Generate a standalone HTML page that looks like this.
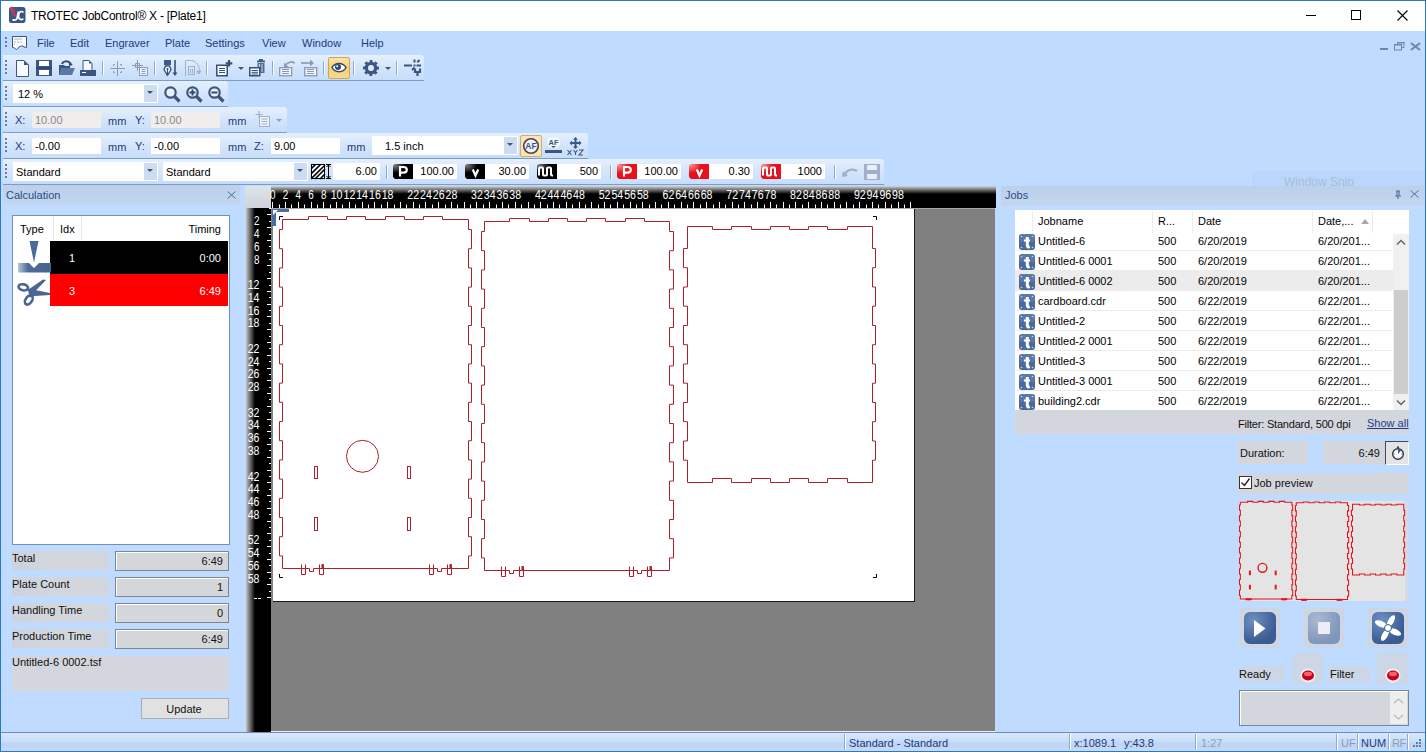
<!DOCTYPE html>
<html><head><meta charset="utf-8">
<style>
*{box-sizing:border-box;margin:0;padding:0}
html,body{width:1426px;height:752px;overflow:hidden}
body{position:relative;background:#bfdbff;font-family:"Liberation Sans",sans-serif;font-size:12px;color:#000}
.a{position:absolute}
.t{position:absolute;white-space:nowrap;line-height:14px}
.tb{position:absolute;background:linear-gradient(#e6f0fd,#d6e6fb 45%,#c6ddfa);border-bottom:1px solid #7b9cc9;border-radius:0 3px 0 0}
.grip{position:absolute;left:5px;width:2px;background:repeating-linear-gradient(#5d7fb0 0 2px,transparent 2px 4px)}
.inp{position:absolute;background:#fff}
.lbl{color:#1d3a7a}
.sep{position:absolute;width:1px;background:#8ea9cf;box-shadow:1px 0 0 #fff}
.combo-btn{position:absolute;background:#cddcf3}
.arrow{position:absolute;width:0;height:0;border-left:3.5px solid transparent;border-right:3.5px solid transparent;border-top:3.5px solid #44536e}
</style></head>
<body>
<!-- window border -->
<div class="a" style="left:0;top:0;width:1426px;height:1px;background:#2b79c2"></div>
<div class="a" style="left:0;top:0;width:1px;height:752px;background:#2b79c2"></div>
<div class="a" style="left:1425px;top:0;width:1px;height:752px;background:#2b79c2"></div>
<!-- title bar -->
<div class="a" style="left:1px;top:1px;width:1424px;height:30px;background:#fff"></div>
<svg class="a" style="left:9px;top:7px" width="17" height="16"><rect x="0" y="0" width="16.5" height="16" rx="2.8" fill="#3b5585"/><path d="M0.5 1.5Q1 0 2.5 0H4.5L7 9 5.5 10.5z" fill="#c8324a"/><path d="M2 1l3 8.5" stroke="#4c8a8a" stroke-width=".8" opacity=".6"/><path d="M9.5 4.5L8 11.5Q7.3 13.3 5 13H3.5" fill="none" stroke="#fff" stroke-width="1.8"/><path d="M14.5 5.5Q13.5 4.3 12 4.5 9.8 5 9.6 8.5 9.5 12.5 12.5 12.6 13.8 12.6 14.2 11.5" fill="none" stroke="#fff" stroke-width="1.6"/></svg>
<div class="t" style="left:31px;top:9px;font-size:12px;letter-spacing:-0.25px;color:#000">TROTEC JobControl® X - [Plate1]</div>
<div class="a" style="left:1306px;top:15px;width:10px;height:1px;background:#000"></div>
<div class="a" style="left:1351px;top:10px;width:10px;height:10px;border:1px solid #000"></div>
<svg class="a" style="left:1397px;top:10px" width="11" height="11"><path d="M.5 .5L10.5 10.5M10.5 .5L.5 10.5" stroke="#000" stroke-width="1.1"/></svg>

<!-- menu bar -->
<div class="a" style="left:1px;top:31px;width:1424px;height:24px;background:#bfdbff"></div>
<div class="grip" style="top:37px;height:12px"></div>
<svg class="a" style="left:11px;top:35px" width="17" height="17"><path d="M1.5 1.5h14v11c-2 0-3-1.5-5-1.5s-3 2-5 3.5c-1.5-1-2-2-4-2z" fill="#fafcff" stroke="#44536a"/><path d="M3 4h8M3 7h2M6 7h2M9 7h2M3 9.5h1" stroke="#a9b2bf"/></svg>
<div class="t lbl" style="left:37px;top:36px;font-size:11px">File</div>
<div class="t lbl" style="left:70px;top:36px;font-size:11px">Edit</div>
<div class="t lbl" style="left:105px;top:36px;font-size:11px">Engraver</div>
<div class="t lbl" style="left:165px;top:36px;font-size:11px">Plate</div>
<div class="t lbl" style="left:205px;top:36px;font-size:11px">Settings</div>
<div class="t lbl" style="left:262px;top:36px;font-size:11px">View</div>
<div class="t lbl" style="left:302px;top:36px;font-size:11px">Window</div>
<div class="t lbl" style="left:361px;top:36px;font-size:11px">Help</div>
<div class="a" style="left:1380px;top:48px;width:8px;height:2px;background:#7388a6"></div>
<svg class="a" style="left:1394px;top:41px" width="11" height="10"><path d="M3.5 3V1.5h6.5v5H8" fill="none" stroke="#7388a6"/><path d="M3 1h7.5v1.5H3z" fill="#7388a6"/><rect x="0.5" y="3.5" width="7" height="5.5" fill="none" stroke="#7388a6"/><path d="M0 3h8v1.5H0z" fill="#7388a6"/></svg>
<svg class="a" style="left:1410px;top:42px" width="11" height="9"><path d="M1 1L10 8M10 1L1 8" stroke="#7388a6" stroke-width="2.2"/></svg>

<!-- toolbars -->
<div class="tb" style="left:3px;top:55px;width:421px;height:26px"></div>
<div class="tb" style="left:3px;top:81px;width:225px;height:26px"></div>
<div class="tb" style="left:3px;top:107px;width:284px;height:26px"></div>
<div class="tb" style="left:3px;top:133px;width:585px;height:26px"></div>
<div class="tb" style="left:3px;top:159px;width:881px;height:26px"></div>
<div id="toolbars"></div>
<div class="grip" style="top:86px;height:16px"></div>
<div class="inp" style="left:13px;top:84px;width:145px;height:19px"></div><div class="combo-btn" style="left:144px;top:85px;width:13px;height:17px"></div><div class="arrow" style="left:147px;top:91px;border-top-color:#44536e"></div><div class="t" style="left:18px;top:87px;font-size:11px;color:#000">12 %</div>
<svg class="a" style="left:164px;top:86px" width="17" height="17"><circle cx="6.5" cy="6.5" r="5.2" fill="#eaf1fb" stroke="#3d5680" stroke-width="2.2"/><path d="M10 10l5.5 5.5" stroke="#3d5680" stroke-width="3.2"/></svg><svg class="a" style="left:186px;top:86px" width="17" height="17"><circle cx="6.5" cy="6.5" r="5.2" fill="#eaf1fb" stroke="#3d5680" stroke-width="2.2"/><path d="M6.5 3.5v6M3.5 6.5h6" stroke="#2e4a74" stroke-width="2"/><path d="M10 10l5.5 5.5" stroke="#3d5680" stroke-width="3.2"/></svg><svg class="a" style="left:208px;top:86px" width="17" height="17"><circle cx="6.5" cy="6.5" r="5.2" fill="#eaf1fb" stroke="#3d5680" stroke-width="2.2"/><path d="M3.5 6.5h6" stroke="#2e4a74" stroke-width="2"/><path d="M10 10l5.5 5.5" stroke="#3d5680" stroke-width="3.2"/></svg>
<div class="grip" style="top:112px;height:16px"></div>
<div class="t lbl" style="left:15px;top:113px;font-size:11px">X:</div>
<div class="inp" style="left:32px;top:112px;width:69px;height:16px;background:#efeeec"></div>
<div class="t" style="left:35px;top:113px;font-size:11px;color:#8a8a8a">10.00</div>
<div class="t lbl" style="left:108px;top:114px;font-size:11px">mm</div>
<div class="t lbl" style="left:135px;top:113px;font-size:11px">Y:</div>
<div class="inp" style="left:151px;top:112px;width:69px;height:16px;background:#efeeec"></div>
<div class="t" style="left:154px;top:113px;font-size:11px;color:#8a8a8a">10.00</div>
<div class="t lbl" style="left:228px;top:114px;font-size:11px">mm</div>
<svg class="a" style="left:255px;top:111px" width="17" height="17"><path d="M4 0v7M0.5 3.5h7" stroke="#9fb0c8" stroke-width="1.2"/><rect x="4.5" y="5.5" width="10" height="10" fill="#eef3fa" stroke="#9fb0c8"/><path d="M6.5 8h6M6.5 10.5h6M6.5 13h6" stroke="#9fb0c8"/></svg>
<div class="arrow" style="left:276px;top:119px;border-top-color:#8ea0ba"></div>
<div class="grip" style="top:138px;height:16px"></div>
<div class="t lbl" style="left:15px;top:139px;font-size:11px">X:</div>
<div class="inp" style="left:32px;top:138px;width:69px;height:16px"></div>
<div class="t" style="left:35px;top:139px;font-size:11px">-0.00</div>
<div class="t lbl" style="left:108px;top:140px;font-size:11px">mm</div>
<div class="t lbl" style="left:135px;top:139px;font-size:11px">Y:</div>
<div class="inp" style="left:151px;top:138px;width:69px;height:16px"></div>
<div class="t" style="left:154px;top:139px;font-size:11px">-0.00</div>
<div class="t lbl" style="left:228px;top:140px;font-size:11px">mm</div>
<div class="t lbl" style="left:254px;top:139px;font-size:11px">Z:</div>
<div class="inp" style="left:271px;top:138px;width:69px;height:16px"></div>
<div class="t" style="left:274px;top:139px;font-size:11px">9.00</div>
<div class="t lbl" style="left:347px;top:140px;font-size:11px">mm</div>
<div class="inp" style="left:372px;top:136px;width:146px;height:19px"></div><div class="combo-btn" style="left:504px;top:137px;width:13px;height:17px"></div><div class="arrow" style="left:507px;top:143px;border-top-color:#44536e"></div><div class="t" style="left:385px;top:139px;font-size:11px;color:#000">1.5 inch</div>
<div class="a" style="left:520px;top:135px;width:22px;height:22px;border:1px solid #c9b07a;border-radius:2px;background:linear-gradient(#fce4b8,#f8e7a8)"></div>
<svg class="a" style="left:522px;top:137px" width="18" height="18"><circle cx="9" cy="9" r="7.3" fill="#f4f0f8" stroke="#4a3f5c" stroke-width="1.6"/><text x="9" y="12.3" font-size="8.5" font-weight="bold" text-anchor="middle" fill="#3a5784" font-family="Liberation Sans">AF</text></svg>
<svg class="a" style="left:545px;top:137px" width="17" height="18"><rect x="2" y="0" width="13" height="11" rx="5" fill="#f4f7fb"/><text x="8.5" y="8" font-size="7.5" font-weight="bold" text-anchor="middle" fill="#3a5784" font-family="Liberation Sans">AF</text><path d="M6 9h5l-2.5 2z" fill="#3a5784"/><rect x="0" y="13" width="17" height="3" fill="#3a5784"/></svg>
<svg class="a" style="left:566px;top:137px" width="19" height="19"><path d="M9.5 1.5v9M5 6h9" stroke="#3a5784" stroke-width="2"/><path d="M9.5 0l2.5 2.5h-5zM9.5 12l2.5-2.5h-5zM3.5 6l2.5-2.5v5zM15.5 6l-2.5-2.5v5z" fill="#3a5784"/><path d="M1.5 13l4 5M5.5 13l-4 5M7.5 13l2 2.5 2-2.5M9.5 15.5V18M13 13h4l-4 5h4" stroke="#3a5784" stroke-width="1.1" fill="none"/></svg>
<div class="grip" style="top:164px;height:16px"></div>
<div class="inp" style="left:13px;top:162px;width:145px;height:19px"></div><div class="combo-btn" style="left:144px;top:163px;width:13px;height:17px"></div><div class="arrow" style="left:147px;top:169px;border-top-color:#44536e"></div><div class="t" style="left:16px;top:165px;font-size:11px;color:#000">Standard</div>
<div class="inp" style="left:163px;top:162px;width:145px;height:19px"></div><div class="combo-btn" style="left:294px;top:163px;width:13px;height:17px"></div><div class="arrow" style="left:297px;top:169px;border-top-color:#44536e"></div><div class="t" style="left:166px;top:165px;font-size:11px;color:#000">Standard</div>
<svg class="a" style="left:311px;top:164px" width="21" height="16"><rect x="0.5" y="0.5" width="13" height="14" fill="#fff" stroke="#000"/><path d="M0 5L5 0M0 10L10 0M0 15L14 1M4 15L14 5M9 15l5-5" stroke="#000" stroke-width="1.6"/><path d="M15 0.5h5M17.5 0.5v14M15 14.5h5" stroke="#000"/><path d="M15.5 3l2-2 2 2M15.5 12l2 2 2-2" fill="none" stroke="#000"/></svg>
<div class="inp" style="left:333px;top:163px;width:47px;height:17px"></div>
<div class="t" style="left:333px;top:164px;width:44px;text-align:right;font-size:11px">6.00</div>
<div class="sep" style="left:386px;top:165px;height:14px"></div>
<svg class="a" style="left:393px;top:164px" width="20" height="15"><defs><radialGradient id="sh393" cx="0.1" cy="0.1" r="0.5"><stop offset="0" stop-color="#7a7a7a"/><stop offset="1" stop-color="#000"/></radialGradient></defs><path d="M3 0H20V15H2L0 13V3Q0 0 3 0z" fill="url(#sh393)"/><path d="M7 12.5V3h3.5c2.2 0 3.3 1 3.3 2.8s-1.1 2.9-3.3 2.9H7" fill="none" stroke="#fff" stroke-width="2.2"/></svg><div class="inp" style="left:413px;top:164px;width:44px;height:15px"></div><div class="t" style="left:413px;top:164px;width:41px;text-align:right;font-size:11px;line-height:15px">100.00</div><svg class="a" style="left:465px;top:164px" width="20" height="15"><defs><radialGradient id="sh465" cx="0.1" cy="0.1" r="0.5"><stop offset="0" stop-color="#7a7a7a"/><stop offset="1" stop-color="#000"/></radialGradient></defs><path d="M3 0H20V15H2L0 13V3Q0 0 3 0z" fill="url(#sh465)"/><path d="M7.8 5.5l2.7 6 2.7-6" fill="none" stroke="#fff" stroke-width="2.2"/></svg><div class="inp" style="left:485px;top:164px;width:44px;height:15px"></div><div class="t" style="left:485px;top:164px;width:41px;text-align:right;font-size:11px;line-height:15px">30.00</div><svg class="a" style="left:537px;top:164px" width="20" height="15"><defs><radialGradient id="sh537" cx="0.1" cy="0.1" r="0.5"><stop offset="0" stop-color="#7a7a7a"/><stop offset="1" stop-color="#000"/></radialGradient></defs><path d="M3 0H20V15H2L0 13V3Q0 0 3 0z" fill="url(#sh537)"/><path d="M2 11.5V4.5q0-1 1-1h2q1 0 1 1v6q0 1 1 1h2q1 0 1-1v-6q0-1 1-1h2q1 0 1 1v6q0 1 1 1h1" fill="none" stroke="#fff" stroke-width="2"/></svg><div class="inp" style="left:557px;top:164px;width:44px;height:15px"></div><div class="t" style="left:557px;top:164px;width:41px;text-align:right;font-size:11px;line-height:15px">500</div><div class="sep" style="left:610px;top:165px;height:14px"></div><svg class="a" style="left:617px;top:164px" width="20" height="15"><defs><radialGradient id="sh617" cx="0.1" cy="0.1" r="0.5"><stop offset="0" stop-color="#ff8a8a"/><stop offset="1" stop-color="#e8101a"/></radialGradient></defs><path d="M3 0H20V15H2L0 13V3Q0 0 3 0z" fill="url(#sh617)"/><path d="M7 12.5V3h3.5c2.2 0 3.3 1 3.3 2.8s-1.1 2.9-3.3 2.9H7" fill="none" stroke="#fff" stroke-width="2.2"/></svg><div class="inp" style="left:637px;top:164px;width:44px;height:15px"></div><div class="t" style="left:637px;top:164px;width:41px;text-align:right;font-size:11px;line-height:15px">100.00</div><svg class="a" style="left:689px;top:164px" width="20" height="15"><defs><radialGradient id="sh689" cx="0.1" cy="0.1" r="0.5"><stop offset="0" stop-color="#ff8a8a"/><stop offset="1" stop-color="#e8101a"/></radialGradient></defs><path d="M3 0H20V15H2L0 13V3Q0 0 3 0z" fill="url(#sh689)"/><path d="M7.8 5.5l2.7 6 2.7-6" fill="none" stroke="#fff" stroke-width="2.2"/></svg><div class="inp" style="left:709px;top:164px;width:44px;height:15px"></div><div class="t" style="left:709px;top:164px;width:41px;text-align:right;font-size:11px;line-height:15px">0.30</div><svg class="a" style="left:761px;top:164px" width="20" height="15"><defs><radialGradient id="sh761" cx="0.1" cy="0.1" r="0.5"><stop offset="0" stop-color="#ff8a8a"/><stop offset="1" stop-color="#e8101a"/></radialGradient></defs><path d="M3 0H20V15H2L0 13V3Q0 0 3 0z" fill="url(#sh761)"/><path d="M2 11.5V4.5q0-1 1-1h2q1 0 1 1v6q0 1 1 1h2q1 0 1-1v-6q0-1 1-1h2q1 0 1 1v6q0 1 1 1h1" fill="none" stroke="#fff" stroke-width="2"/></svg><div class="inp" style="left:781px;top:164px;width:44px;height:15px"></div><div class="t" style="left:781px;top:164px;width:41px;text-align:right;font-size:11px;line-height:15px">1000</div><div class="sep" style="left:834px;top:165px;height:14px"></div>
<svg class="a" style="left:842px;top:163px" width="17" height="16"><path d="M3 12c1-5 7-7 12-4" fill="none" stroke="#9fb0c8" stroke-width="2.2"/><path d="M1 8l5 5-6 1z" fill="#9fb0c8"/></svg>
<svg class="a" style="left:864px;top:164px" width="16" height="16"><rect x="0" y="0" width="16" height="16" fill="#9fb0c8"/><rect x="3" y="1" width="10" height="5" fill="#e6eef9"/><rect x="3" y="10" width="10" height="5" fill="#e6eef9"/></svg>

<div class="grip" style="top:60px;height:16px"></div>
<svg class="a" style="left:16px;top:60px" width="13" height="17"><path d="M.5 .5h7.5l4.5 4.5v11.5h-12z" fill="#f8f9fc" stroke="#3a5784"/><path d="M8 .5v4.5h4.5z" fill="#3a5784"/></svg>
<svg class="a" style="left:36px;top:60px" width="16" height="16"><rect x="0" y="0" width="16" height="16" fill="#3a5784"/><rect x="3" y="1" width="10" height="5" fill="#fff"/><rect x="3" y="10" width="10" height="5" fill="#fff"/><rect x="0" y="7" width="16" height="2" fill="#2e4a74"/></svg>
<svg class="a" style="left:58px;top:59px" width="17" height="17"><path d="M1 6h5l1 1h5v9H1z" fill="#345580"/><path d="M3 9h14l-3 7H1z" fill="#5a7aa4"/><path d="M4 5c1-3 6-4 9 0" fill="none" stroke="#2e4a74" stroke-width="2"/><path d="M11 3l4 3-4 1z" fill="#2e4a74"/></svg>
<svg class="a" style="left:80px;top:60px" width="17" height="16"><path d="M3 .5h6l3 3v7H3z" fill="#f6f7fb" stroke="#3a5784"/><path d="M9 .5v3h3" fill="#3a5784"/><rect x="0" y="10" width="16" height="6" fill="#3a5784"/><rect x="2" y="12" width="4" height="1" fill="#fff"/></svg>
<div class="sep" style="left:102px;top:61px;height:14px"></div>
<svg class="a" style="left:109px;top:60px" width="17" height="17"><g stroke="#8a9cba" fill="none" stroke-width="1"><path d="M8.5 1v15M1 8.5h15"/><path d="M4.5 6V4.5H6M11 4.5h1.5V6M12.5 11v1.5H11M6 12.5H4.5V11"/></g></svg>
<svg class="a" style="left:132px;top:60px" width="17" height="17"><g stroke="#8a9cba" fill="none" stroke-width="1"><path d="M5.5 0v11M0 5.5h11M3.5 3.5h4v4h-4z"/><rect x="7.5" y="7.5" width="8" height="8" fill="#edf2fa"/><path d="M9.5 9.5h4M9.5 11.5h4M9.5 13.5h4"/></g></svg>
<div class="sep" style="left:154px;top:61px;height:14px"></div>
<svg class="a" style="left:163px;top:60px" width="16" height="17"><rect x="1" y="0" width="7" height="5" fill="#3f5c88"/><path d="M4.5 15.5L1 9.5 2.5 6h4L8 9.5z" fill="#fff" stroke="#33507c" stroke-width="1.4" stroke-linejoin="round"/><path d="M4.5 9v5" stroke="#33507c"/><circle cx="4.5" cy="9" r="1.1" fill="#33507c"/><path d="M12 0v13" stroke="#33507c" stroke-width="1.6"/><path d="M9.5 12.5h5L12 16z" fill="#33507c"/></svg>
<svg class="a" style="left:185px;top:60px" width="16" height="17"><path d="M.5 16V.5h5c5 0 8 4 9 9" fill="none" stroke="#9fb0c8"/><rect x="3.5" y="6.5" width="6" height="8" fill="none" stroke="#9fb0c8"/><path d="M5.5 9v4M7.5 9v4M12 11h4l-2 3z" stroke="#9fb0c8" fill="#9fb0c8"/></svg>
<div class="sep" style="left:206px;top:61px;height:14px"></div>
<svg class="a" style="left:216px;top:60px" width="17" height="17"><rect x=".75" y="5.25" width="10.5" height="10.5" fill="#fff" stroke="#33507c" stroke-width="1.5"/><path d="M3 8.5h6M3 10.5h6M3 12.5h6" stroke="#33507c" stroke-width="1.1"/><path d="M13 0v6.5M9.7 3.3h6.6" stroke="#33507c" stroke-width="2.2"/></svg>
<div class="arrow" style="left:238px;top:67px"></div>
<svg class="a" style="left:249px;top:59px" width="17" height="18"><path d="M8 1.5h8v1.8H8z" fill="#3f5c88"/><rect x="10" y="0" width="4" height="2" fill="#3f5c88"/><path d="M8.5 4h7v10h-7z" fill="#4f6d9a"/><path d="M10.5 5v8M13 5v8" stroke="#d9e3f2" stroke-width=".9"/><rect x=".75" y="8.75" width="10" height="8" fill="#fff" stroke="#33507c" stroke-width="1.5"/><path d="M2.5 11.5h6.5M2.5 13.3h6.5M2.5 15h6.5" stroke="#33507c"/></svg>
<div class="sep" style="left:272px;top:61px;height:14px"></div>
<svg class="a" style="left:279px;top:58px" width="17" height="19"><rect x=".7" y="9.7" width="12" height="8" fill="#f3f7fd" stroke="#8898b5" stroke-width="1.3"/><path d="M3 11.5h7M3 13.5h7M3 15.5h7" stroke="#8898b5" stroke-width="1.1"/><path d="M15.5 5.5C14.5 3 10 3.5 7 6.5" fill="none" stroke="#8898b5" stroke-width="1.6"/><path d="M5 4.5v4.5h4.5z" fill="#8898b5"/></svg>
<svg class="a" style="left:304px;top:58px" width="14" height="19"><rect x=".7" y="9.7" width="12" height="8" fill="#f3f7fd" stroke="#8898b5" stroke-width="1.3"/><path d="M3 11.5h7M3 13.5h7M3 15.5h7" stroke="#8898b5" stroke-width="1.1"/></svg><svg class="a" style="left:300px;top:58px" width="16" height="10"><path d="M1 5h11" stroke="#8898b5" stroke-width="1.6"/><path d="M10 1.5l4 3.5-4 3.5z" fill="#8898b5"/></svg>
<div class="sep" style="left:323px;top:61px;height:14px"></div>
<div class="a" style="left:328px;top:57px;width:22px;height:22px;border:1px solid #c5a56a;border-radius:2px;background:linear-gradient(#fde3a3,#fccf6e 50%,#fbd88c)"></div>
<svg class="a" style="left:331px;top:61px" width="16" height="13"><path d="M1 6.5C4 1 12 1 15 6.5 12 12 4 12 1 6.5z" fill="#fff" stroke="#2e4a74" stroke-width="1.5"/><circle cx="7" cy="6" r="3" fill="#2e4a74"/><circle cx="6.2" cy="5.2" r="1" fill="#fff"/></svg>
<div class="sep" style="left:353px;top:61px;height:14px"></div>
<svg class="a" style="left:363px;top:60px" width="16" height="16"><circle cx="8" cy="8" r="4.6" fill="none" stroke="#3a5784" stroke-width="3.4"/><circle cx="8" cy="8" r="6.6" fill="none" stroke="#3a5784" stroke-width="2.8" stroke-dasharray="2.8 2.38" stroke-dashoffset="1.4" transform="rotate(-90 8 8)"/><circle cx="8" cy="8" r="2.7" fill="#dfe9f8"/></svg>
<div class="arrow" style="left:385px;top:67px"></div>
<div class="sep" style="left:396px;top:61px;height:14px"></div>
<svg class="a" style="left:404px;top:55px" width="18" height="23"><g stroke="#3a5784" fill="none"><path d="M0 10.5h8" stroke-width="2"/><rect x="9.5" y="9.5" width="2" height="2" fill="#3a5784" stroke="none"/><path d="M10.5 4.5v3M15.5 5l-2.2 2.2M12.5 10.5h4.5M8 15l2.5-2.5" stroke-width="2"/><path d="M11 13.5v3.5h5v-3.5M13.5 17v4" stroke-width="2.2"/></g></svg>

<!-- calc panel -->
<div id="calc"></div>
<div class="a" style="left:3px;top:185px;width:237px;height:20px;background:linear-gradient(#bdd0e9,#c3d6ef)"></div>
<div class="t" style="left:6px;top:188px;font-size:11px;color:#2a4d85">Calculation</div>
<svg class="a" style="left:227px;top:191px" width="9" height="8"><path d="M.5 .5l8 7M8.5 .5l-8 7" stroke="#4f6f9c" stroke-width="1"/></svg>
<div class="a" style="left:12px;top:215px;width:218px;height:330px;background:#fff;border:1px solid #7490b4"></div>
<div class="a" style="left:53px;top:216px;width:1px;height:24px;background:#e6e6e6"></div>
<div class="a" style="left:81px;top:216px;width:1px;height:24px;background:#e6e6e6"></div>
<div class="t" style="left:20px;top:222px;font-size:11px">Type</div>
<div class="t" style="left:60px;top:222px;font-size:11px">Idx</div>
<div class="t" style="left:150px;top:222px;width:71px;text-align:right;font-size:11px">Timing</div>
<div class="a" style="left:50px;top:241px;width:178px;height:33px;background:#000"></div>
<div class="a" style="left:50px;top:274px;width:178px;height:32px;background:#f00"></div>
<div class="t" style="left:69px;top:251px;font-size:11px;color:#fff">1</div>
<div class="t" style="left:150px;top:251px;width:71px;text-align:right;font-size:11px;color:#fff">0:00</div>
<div class="t" style="left:69px;top:284px;font-size:11px;color:#fff">3</div>
<div class="t" style="left:150px;top:284px;width:71px;text-align:right;font-size:11px;color:#fff">6:49</div>
<svg class="a" style="left:17px;top:241px" width="34" height="33"><defs><linearGradient id="kg" x1="0" x2="1"><stop offset="0" stop-color="#b5c5dc"/><stop offset=".3" stop-color="#4f6d9a"/><stop offset="1" stop-color="#46628f"/></linearGradient></defs><path d="M12.5 0h9L17 21.5z" fill="#4a6a9b"/><path d="M1 22h11l5 5 5-5h12v9.5H1z" fill="url(#kg)"/></svg>
<svg class="a" style="left:17px;top:278px" width="34" height="30"><g fill="none" stroke="#4a6494" stroke-width="2.6"><ellipse cx="6.3" cy="9.3" rx="4.8" ry="3" transform="rotate(12 6.3 9.3)"/><ellipse cx="11.8" cy="22" rx="3.2" ry="5" transform="rotate(35 11.8 22)"/></g><path d="M10 12.5L26 1.5l3 .5-12 12.5z" fill="#4a6494"/><path d="M11 11.5l7 .5 15 3v2l-15 1-5.5 1.5z" fill="#4a6494"/></svg>
<div class="a" style="left:12px;top:551px;width:98px;height:19px;background:linear-gradient(90deg,#ccd3dd,#d3d6dc 40%,#d3d6dc 90%,#cdd7e5)"></div><div class="t" style="left:12px;top:551px;font-size:11px;color:#111">Total</div><div class="a" style="left:115px;top:551px;width:114px;height:20px;background:#d4d6da;border:1px solid #7b8594;box-shadow:inset 1px 1px 0 #fff"></div><div class="t" style="left:115px;top:554px;width:108px;text-align:right;font-size:11px;color:#111">6:49</div>
<div class="a" style="left:12px;top:577px;width:98px;height:19px;background:linear-gradient(90deg,#ccd3dd,#d3d6dc 40%,#d3d6dc 90%,#cdd7e5)"></div><div class="t" style="left:12px;top:577px;font-size:11px;color:#111">Plate Count</div><div class="a" style="left:115px;top:577px;width:114px;height:20px;background:#d4d6da;border:1px solid #7b8594;box-shadow:inset 1px 1px 0 #fff"></div><div class="t" style="left:115px;top:580px;width:108px;text-align:right;font-size:11px;color:#111">1</div>
<div class="a" style="left:12px;top:603px;width:98px;height:19px;background:linear-gradient(90deg,#ccd3dd,#d3d6dc 40%,#d3d6dc 90%,#cdd7e5)"></div><div class="t" style="left:12px;top:603px;font-size:11px;color:#111">Handling Time</div><div class="a" style="left:115px;top:603px;width:114px;height:20px;background:#d4d6da;border:1px solid #7b8594;box-shadow:inset 1px 1px 0 #fff"></div><div class="t" style="left:115px;top:606px;width:108px;text-align:right;font-size:11px;color:#111">0</div>
<div class="a" style="left:12px;top:629px;width:98px;height:19px;background:linear-gradient(90deg,#ccd3dd,#d3d6dc 40%,#d3d6dc 90%,#cdd7e5)"></div><div class="t" style="left:12px;top:629px;font-size:11px;color:#111">Production Time</div><div class="a" style="left:115px;top:629px;width:114px;height:20px;background:#d4d6da;border:1px solid #7b8594;box-shadow:inset 1px 1px 0 #fff"></div><div class="t" style="left:115px;top:632px;width:108px;text-align:right;font-size:11px;color:#111">6:49</div>
<div class="a" style="left:12px;top:656px;width:217px;height:35px;background:#d3d6dc"></div>
<div class="t" style="left:12px;top:655px;font-size:11px;color:#111">Untitled-6 0002.tsf</div>
<div class="a" style="left:141px;top:698px;width:88px;height:21px;background:#e1e1e1;border:1px solid #adadad"></div>
<div class="t" style="left:141px;top:702px;width:86px;text-align:center;font-size:11px;color:#111">Update</div>

<!-- canvas -->
<div id="canvas"></div>
<div class="a" style="left:245px;top:186px;width:26px;height:22px;background:linear-gradient(#dfe3ea,#cfd3da)"></div>
<div class="a" style="left:271px;top:186px;width:725px;height:22px;background:linear-gradient(#d4d4d4,#6a6a6a 4px,#000 8px)"></div>
<div class="a" style="left:246px;top:208px;width:25px;height:524px;background:linear-gradient(90deg,#c4c4c4,#5a5a5a 5px,#000 9px)"></div>
<div class="a" style="left:271px;top:208px;width:724px;height:524px;background:#808080"></div>
<div class="a" style="left:271px;top:208px;width:724px;height:1px;background:#a8a8a8"></div>
<div class="a" style="left:271px;top:731px;width:724px;height:1px;background:#f0f0f0"></div>
<div class="a" style="left:273px;top:209px;width:641px;height:392px;background:#fff"></div>
<div class="a" style="left:914px;top:209px;width:1px;height:393px;background:#1a1a1a"></div>
<div class="a" style="left:273px;top:601px;width:642px;height:1px;background:#1a1a1a"></div>
<svg class="a" style="left:272px;top:209px" width="20" height="20"><path d="M0 0h17v3H4v14H0z" fill="#4a6fa5"/><path d="M1 1l5 0-5 5z" fill="#fff"/></svg>
<svg class="a" style="left:0;top:0" width="1426" height="752"><path d="M282.5 219.5H308.5V216.5H327.5V219.5H346.5V216.5H365.5V219.5H385.5V216.5H404.5V219.5H423.5V216.5H442.5V219.5H468.5V229.5H471.5V248.7H468.5V267.9H471.5V287.1H468.5V306.3H471.5V325.5H468.5V344.7H471.5V363.9H468.5V383.1H471.5V402.3H468.5V421.5H471.5V440.7H468.5V459.9H471.5V479.1H468.5V498.3H471.5V517.5H468.5V536.7H471.5V555.9H468.5V568.5H441.5V571.5H437.5V568.5H313.5V571.5H309.5V568.5H282.5V555.9H279.5V536.7H282.5V517.5H279.5V498.3H282.5V479.1H279.5V459.9H282.5V440.7H279.5V421.5H282.5V402.3H279.5V383.1H282.5V363.9H279.5V344.7H282.5V325.5H279.5V306.3H282.5V287.1H279.5V267.9H282.5V248.7H279.5V229.5H282.5Z" fill="none" stroke="#b01f2c" stroke-width="1"/><path d="M484.5 221.5H509.5V218.5H529.5V221.5H548.5V218.5H567.5V221.5H586.5V218.5H605.5V221.5H625.5V218.5H644.5V221.5H669.5V231.5H673.5V250.7H669.5V269.9H673.5V289.1H669.5V308.3H673.5V327.5H669.5V346.7H673.5V365.9H669.5V385.1H673.5V404.3H669.5V423.5H673.5V442.7H669.5V461.9H673.5V481.1H669.5V500.3H673.5V519.5H669.5V538.7H673.5V557.9H669.5V570.5H641.5V573.5H637.5V570.5H513.5V573.5H509.5V570.5H484.5V557.9H481.5V538.7H484.5V519.5H481.5V500.3H484.5V481.1H481.5V461.9H484.5V442.7H481.5V423.5H484.5V404.3H481.5V385.1H484.5V365.9H481.5V346.7H484.5V327.5H481.5V308.3H484.5V289.1H481.5V269.9H484.5V250.7H481.5V231.5H484.5Z" fill="none" stroke="#b01f2c" stroke-width="1"/><path d="M687.5 226.5H712.5V229.5H731.5V226.5H751.5V229.5H770.5V226.5H789.5V229.5H808.5V226.5H827.5V229.5H847.5V226.5H872.5V248.5H875.5V267.7H872.5V287.0H875.5V306.2H872.5V325.5H875.5V344.7H872.5V364.0H875.5V383.2H872.5V402.5H875.5V421.7H872.5V441.0H875.5V460.2H872.5V482.5H847.5V478.5H827.5V482.5H808.5V478.5H789.5V482.5H770.5V478.5H751.5V482.5H731.5V478.5H712.5V482.5H687.5V460.2H683.5V441.0H687.5V421.7H683.5V402.5H687.5V383.2H683.5V364.0H687.5V344.7H683.5V325.5H687.5V306.2H683.5V287.0H687.5V267.7H683.5V248.5H687.5Z" fill="none" stroke="#b01f2c" stroke-width="1"/><path d="M301.5 564.5V574.5H305.5V564.5M319.5 564.5V574.5H323.5V564.5M429.5 564.5V574.5H433.5V564.5M447.5 564.5V574.5H451.5V564.5" fill="none" stroke="#b01f2c" stroke-width="1"/><path d="M501.5 566.5V576.5H505.5V566.5M519.5 566.5V576.5H523.5V566.5M629.5 566.5V576.5H633.5V566.5M647.5 566.5V576.5H651.5V566.5" fill="none" stroke="#b01f2c" stroke-width="1"/><rect x="314.5" y="466.5" width="3" height="12" fill="none" stroke="#b01f2c"/><rect x="407.5" y="466.5" width="3" height="12" fill="none" stroke="#b01f2c"/><rect x="314.5" y="517.5" width="3" height="13" fill="none" stroke="#b01f2c"/><rect x="407.5" y="517.5" width="3" height="13" fill="none" stroke="#b01f2c"/><circle cx="362.5" cy="456.3" r="16" fill="none" stroke="#b01f2c"/><rect x="321.5" y="564" width="2" height="5" fill="#b01f2c"/><rect x="449.5" y="564" width="2" height="5" fill="#b01f2c"/><rect x="521.5" y="566" width="2" height="5" fill="#b01f2c"/><rect x="649.5" y="566" width="2" height="5" fill="#b01f2c"/><path d="M279.5 220V216.5H283M873 216.5H876.5V220M279.5 574V577.5H283M876.5 574V577.5H873" fill="none" stroke="#000"/></svg>
<svg class="a" style="left:0;top:0" width="1426" height="752"><g stroke="#fff" stroke-width="1">
<path d="M272.5 202V208M279.5 204.5V208M285.5 202V208M291.5 204.5V208M298.5 202V208M304.5 204.5V208M311.5 202V208M317.5 204.5V208M323.5 202V208M330.5 204.5V208M336.5 202V208M342.5 204.5V208M349.5 202V208M355.5 204.5V208M362.5 202V208M368.5 204.5V208M374.5 202V208M381.5 204.5V208M387.5 202V208M394.5 204.5V208M400.5 202V208M406.5 204.5V208M413.5 202V208M419.5 204.5V208M425.5 202V208M432.5 204.5V208M438.5 202V208M445.5 204.5V208M451.5 202V208M457.5 204.5V208M464.5 202V208M470.5 204.5V208M476.5 202V208M483.5 204.5V208M489.5 202V208M496.5 204.5V208M502.5 202V208M508.5 204.5V208M515.5 202V208M521.5 204.5V208M528.5 202V208M534.5 204.5V208M540.5 202V208M547.5 204.5V208M553.5 202V208M559.5 204.5V208M566.5 202V208M572.5 204.5V208M579.5 202V208M585.5 204.5V208M591.5 202V208M598.5 204.5V208M604.5 202V208M610.5 204.5V208M617.5 202V208M623.5 204.5V208M630.5 202V208M636.5 204.5V208M642.5 202V208M649.5 204.5V208M655.5 202V208M661.5 204.5V208M668.5 202V208M674.5 204.5V208M681.5 202V208M687.5 204.5V208M693.5 202V208M700.5 204.5V208M706.5 202V208M713.5 204.5V208M719.5 202V208M725.5 204.5V208M732.5 202V208M738.5 204.5V208M744.5 202V208M751.5 204.5V208M757.5 202V208M764.5 204.5V208M770.5 202V208M776.5 204.5V208M783.5 202V208M789.5 204.5V208M795.5 202V208M802.5 204.5V208M808.5 202V208M815.5 204.5V208M821.5 202V208M827.5 204.5V208M834.5 202V208M840.5 204.5V208M846.5 202V208M853.5 204.5V208M859.5 202V208M866.5 204.5V208M872.5 202V208M878.5 204.5V208M885.5 202V208M891.5 204.5V208M898.5 202V208M904.5 204.5V208M910.5 202V208"/><path d="M269 208.5H271M267 214.5H271M269 221.5H271M267 227.5H271M269 234.5H271M267 240.5H271M269 246.5H271M267 253.5H271M269 259.5H271M267 265.5H271M269 272.5H271M267 278.5H271M269 285.5H271M267 291.5H271M269 297.5H271M267 304.5H271M269 310.5H271M267 316.5H271M269 323.5H271M267 329.5H271M269 336.5H271M267 342.5H271M269 348.5H271M267 355.5H271M269 361.5H271M267 368.5H271M269 374.5H271M267 380.5H271M269 387.5H271M267 393.5H271M269 399.5H271M267 406.5H271M269 412.5H271M267 419.5H271M269 425.5H271M267 431.5H271M269 438.5H271M267 444.5H271M269 450.5H271M267 457.5H271M269 463.5H271M267 470.5H271M269 476.5H271M267 482.5H271M269 489.5H271M267 495.5H271M269 501.5H271M267 508.5H271M269 514.5H271M267 521.5H271M269 527.5H271M267 533.5H271M269 540.5H271M267 546.5H271M269 553.5H271M267 559.5H271M269 565.5H271M267 572.5H271M269 578.5H271M267 584.5H271M269 591.5H271M267 597.5H271"/><path d="M254 598.5h3M258 598.5h3"/></g>
<g fill="#fff" font-family="Liberation Sans" font-size="12.5"><text x="272.8" y="199.3" text-anchor="middle" textLength="5.5" lengthAdjust="spacingAndGlyphs">0</text><text x="285.6" y="199.3" text-anchor="middle" textLength="5.5" lengthAdjust="spacingAndGlyphs">2</text><text x="298.3" y="199.3" text-anchor="middle" textLength="5.5" lengthAdjust="spacingAndGlyphs">4</text><text x="311.1" y="199.3" text-anchor="middle" textLength="5.5" lengthAdjust="spacingAndGlyphs">6</text><text x="323.8" y="199.3" text-anchor="middle" textLength="5.5" lengthAdjust="spacingAndGlyphs">8</text><text x="336.6" y="199.3" text-anchor="middle" textLength="11.799999999999999" lengthAdjust="spacingAndGlyphs">10</text><text x="349.4" y="199.3" text-anchor="middle" textLength="11.799999999999999" lengthAdjust="spacingAndGlyphs">12</text><text x="362.1" y="199.3" text-anchor="middle" textLength="11.799999999999999" lengthAdjust="spacingAndGlyphs">14</text><text x="374.9" y="199.3" text-anchor="middle" textLength="11.799999999999999" lengthAdjust="spacingAndGlyphs">16</text><text x="387.6" y="199.3" text-anchor="middle" textLength="11.799999999999999" lengthAdjust="spacingAndGlyphs">18</text><text x="413.2" y="199.3" text-anchor="middle" textLength="11.799999999999999" lengthAdjust="spacingAndGlyphs">22</text><text x="425.9" y="199.3" text-anchor="middle" textLength="11.799999999999999" lengthAdjust="spacingAndGlyphs">24</text><text x="438.7" y="199.3" text-anchor="middle" textLength="11.799999999999999" lengthAdjust="spacingAndGlyphs">26</text><text x="451.4" y="199.3" text-anchor="middle" textLength="11.799999999999999" lengthAdjust="spacingAndGlyphs">28</text><text x="477.0" y="199.3" text-anchor="middle" textLength="11.799999999999999" lengthAdjust="spacingAndGlyphs">32</text><text x="489.7" y="199.3" text-anchor="middle" textLength="11.799999999999999" lengthAdjust="spacingAndGlyphs">34</text><text x="502.5" y="199.3" text-anchor="middle" textLength="11.799999999999999" lengthAdjust="spacingAndGlyphs">36</text><text x="515.2" y="199.3" text-anchor="middle" textLength="11.799999999999999" lengthAdjust="spacingAndGlyphs">38</text><text x="540.8" y="199.3" text-anchor="middle" textLength="11.799999999999999" lengthAdjust="spacingAndGlyphs">42</text><text x="553.5" y="199.3" text-anchor="middle" textLength="11.799999999999999" lengthAdjust="spacingAndGlyphs">44</text><text x="566.3" y="199.3" text-anchor="middle" textLength="11.799999999999999" lengthAdjust="spacingAndGlyphs">46</text><text x="579.0" y="199.3" text-anchor="middle" textLength="11.799999999999999" lengthAdjust="spacingAndGlyphs">48</text><text x="604.6" y="199.3" text-anchor="middle" textLength="11.799999999999999" lengthAdjust="spacingAndGlyphs">52</text><text x="617.3" y="199.3" text-anchor="middle" textLength="11.799999999999999" lengthAdjust="spacingAndGlyphs">54</text><text x="630.1" y="199.3" text-anchor="middle" textLength="11.799999999999999" lengthAdjust="spacingAndGlyphs">56</text><text x="642.8" y="199.3" text-anchor="middle" textLength="11.799999999999999" lengthAdjust="spacingAndGlyphs">58</text><text x="668.4" y="199.3" text-anchor="middle" textLength="11.799999999999999" lengthAdjust="spacingAndGlyphs">62</text><text x="681.1" y="199.3" text-anchor="middle" textLength="11.799999999999999" lengthAdjust="spacingAndGlyphs">64</text><text x="693.9" y="199.3" text-anchor="middle" textLength="11.799999999999999" lengthAdjust="spacingAndGlyphs">66</text><text x="706.6" y="199.3" text-anchor="middle" textLength="11.799999999999999" lengthAdjust="spacingAndGlyphs">68</text><text x="732.2" y="199.3" text-anchor="middle" textLength="11.799999999999999" lengthAdjust="spacingAndGlyphs">72</text><text x="744.9" y="199.3" text-anchor="middle" textLength="11.799999999999999" lengthAdjust="spacingAndGlyphs">74</text><text x="757.7" y="199.3" text-anchor="middle" textLength="11.799999999999999" lengthAdjust="spacingAndGlyphs">76</text><text x="770.4" y="199.3" text-anchor="middle" textLength="11.799999999999999" lengthAdjust="spacingAndGlyphs">78</text><text x="796.0" y="199.3" text-anchor="middle" textLength="11.799999999999999" lengthAdjust="spacingAndGlyphs">82</text><text x="808.7" y="199.3" text-anchor="middle" textLength="11.799999999999999" lengthAdjust="spacingAndGlyphs">84</text><text x="821.5" y="199.3" text-anchor="middle" textLength="11.799999999999999" lengthAdjust="spacingAndGlyphs">86</text><text x="834.2" y="199.3" text-anchor="middle" textLength="11.799999999999999" lengthAdjust="spacingAndGlyphs">88</text><text x="859.8" y="199.3" text-anchor="middle" textLength="11.799999999999999" lengthAdjust="spacingAndGlyphs">92</text><text x="872.5" y="199.3" text-anchor="middle" textLength="11.799999999999999" lengthAdjust="spacingAndGlyphs">94</text><text x="885.3" y="199.3" text-anchor="middle" textLength="11.799999999999999" lengthAdjust="spacingAndGlyphs">96</text><text x="898.0" y="199.3" text-anchor="middle" textLength="11.799999999999999" lengthAdjust="spacingAndGlyphs">98</text><text x="259.5" y="225.3" text-anchor="end" textLength="5.5" lengthAdjust="spacingAndGlyphs">2</text><text x="259.5" y="238.0" text-anchor="end" textLength="5.5" lengthAdjust="spacingAndGlyphs">4</text><text x="259.5" y="250.8" text-anchor="end" textLength="5.5" lengthAdjust="spacingAndGlyphs">6</text><text x="259.5" y="263.5" text-anchor="end" textLength="5.5" lengthAdjust="spacingAndGlyphs">8</text><text x="259.5" y="289.1" text-anchor="end" textLength="11.799999999999999" lengthAdjust="spacingAndGlyphs">12</text><text x="259.5" y="301.8" text-anchor="end" textLength="11.799999999999999" lengthAdjust="spacingAndGlyphs">14</text><text x="259.5" y="314.6" text-anchor="end" textLength="11.799999999999999" lengthAdjust="spacingAndGlyphs">16</text><text x="259.5" y="327.3" text-anchor="end" textLength="11.799999999999999" lengthAdjust="spacingAndGlyphs">18</text><text x="259.5" y="352.9" text-anchor="end" textLength="11.799999999999999" lengthAdjust="spacingAndGlyphs">22</text><text x="259.5" y="365.6" text-anchor="end" textLength="11.799999999999999" lengthAdjust="spacingAndGlyphs">24</text><text x="259.5" y="378.4" text-anchor="end" textLength="11.799999999999999" lengthAdjust="spacingAndGlyphs">26</text><text x="259.5" y="391.1" text-anchor="end" textLength="11.799999999999999" lengthAdjust="spacingAndGlyphs">28</text><text x="259.5" y="416.7" text-anchor="end" textLength="11.799999999999999" lengthAdjust="spacingAndGlyphs">32</text><text x="259.5" y="429.4" text-anchor="end" textLength="11.799999999999999" lengthAdjust="spacingAndGlyphs">34</text><text x="259.5" y="442.2" text-anchor="end" textLength="11.799999999999999" lengthAdjust="spacingAndGlyphs">36</text><text x="259.5" y="454.9" text-anchor="end" textLength="11.799999999999999" lengthAdjust="spacingAndGlyphs">38</text><text x="259.5" y="480.5" text-anchor="end" textLength="11.799999999999999" lengthAdjust="spacingAndGlyphs">42</text><text x="259.5" y="493.2" text-anchor="end" textLength="11.799999999999999" lengthAdjust="spacingAndGlyphs">44</text><text x="259.5" y="506.0" text-anchor="end" textLength="11.799999999999999" lengthAdjust="spacingAndGlyphs">46</text><text x="259.5" y="518.7" text-anchor="end" textLength="11.799999999999999" lengthAdjust="spacingAndGlyphs">48</text><text x="259.5" y="544.3" text-anchor="end" textLength="11.799999999999999" lengthAdjust="spacingAndGlyphs">52</text><text x="259.5" y="557.0" text-anchor="end" textLength="11.799999999999999" lengthAdjust="spacingAndGlyphs">54</text><text x="259.5" y="569.8" text-anchor="end" textLength="11.799999999999999" lengthAdjust="spacingAndGlyphs">56</text><text x="259.5" y="582.5" text-anchor="end" textLength="11.799999999999999" lengthAdjust="spacingAndGlyphs">58</text></g></svg>

<!-- jobs -->
<div class="a" style="left:1252px;top:171px;width:173px;height:15px;background:rgba(170,200,240,.25)"></div>
<div class="t" style="left:1284px;top:175px;font-size:12px;color:#a9bdd9">Window Snip</div>
<div id="jobs"></div>
<div class="a" style="left:1001px;top:186px;width:424px;height:20px;background:linear-gradient(#bdd0e9,#c3d6ef)"></div>
<div class="t" style="left:1005px;top:188px;font-size:11px;color:#2a4d85">Jobs</div>
<svg class="a" style="left:1393px;top:190px" width="10" height="10"><path d="M3 1h4M4 1v5M6 1v5M2 6h6M5 6v3" stroke="#4f6f9c" stroke-width="1.1" fill="none"/></svg>
<svg class="a" style="left:1410px;top:190px" width="9" height="8"><path d="M.5 .5l8 7M8.5 .5l-8 7" stroke="#4f6f9c" stroke-width="1"/></svg>
<div class="a" style="left:1015px;top:210px;width:394px;height:200px;background:#fff"></div>
<div class="a" style="left:1032px;top:212px;width:1px;height:21px;background:#ececec"></div>
<div class="a" style="left:1152px;top:212px;width:1px;height:21px;background:#ececec"></div>
<div class="a" style="left:1192px;top:212px;width:1px;height:21px;background:#ececec"></div>
<div class="a" style="left:1312px;top:212px;width:1px;height:21px;background:#ececec"></div>
<div class="a" style="left:1372px;top:212px;width:1px;height:21px;background:#ececec"></div>
<div class="t" style="left:1038px;top:214px;font-size:11px">Jobname</div>
<div class="t" style="left:1158px;top:214px;font-size:11px">R...</div>
<div class="t" style="left:1198px;top:214px;font-size:11px">Date</div>
<div class="t" style="left:1318px;top:214px;font-size:11px">Date,...</div>
<div class="a" style="left:1361px;top:219px;width:0;height:0;border-left:4.5px solid transparent;border-right:4.5px solid transparent;border-bottom:5px solid #a8a8a8"></div>
<div class="a" style="left:1015px;top:270px;width:378px;height:20px;background:#ececec"></div>
<div class="a" style="left:1015px;top:250px;width:377px;height:1px;background:#ececec"></div><svg class="a" style="left:1019px;top:234px" width="16" height="16"><rect x="0" y="0" width="16" height="16" rx="3" fill="#4a6a9c"/><rect x="0" y="0" width="16" height="8" rx="3" fill="#6687b8" opacity=".5"/><circle cx="2.5" cy="2.5" r=".8" fill="#c9d6ea"/><circle cx="13.5" cy="2.5" r=".8" fill="#c9d6ea"/><circle cx="2.5" cy="13.5" r=".8" fill="#c9d6ea"/><circle cx="13.5" cy="13.5" r=".8" fill="#c9d6ea"/><path d="M8.3 3v8.3c0 1.6 1 1.9 2.4 1.4" stroke="#fff" stroke-width="3" fill="none"/><path d="M5 6.5h6" stroke="#fff" stroke-width="2"/></svg><div class="t" style="left:1038px;top:234px;font-size:11px">Untitled-6</div><div class="t" style="left:1158px;top:234px;font-size:11px">500</div><div class="t" style="left:1198px;top:234px;font-size:11px">6/20/2019</div><div class="t" style="left:1318px;top:234px;font-size:11px">6/20/201...</div><div class="a" style="left:1015px;top:270px;width:377px;height:1px;background:#ececec"></div><svg class="a" style="left:1019px;top:254px" width="16" height="16"><rect x="0" y="0" width="16" height="16" rx="3" fill="#4a6a9c"/><rect x="0" y="0" width="16" height="8" rx="3" fill="#6687b8" opacity=".5"/><circle cx="2.5" cy="2.5" r=".8" fill="#c9d6ea"/><circle cx="13.5" cy="2.5" r=".8" fill="#c9d6ea"/><circle cx="2.5" cy="13.5" r=".8" fill="#c9d6ea"/><circle cx="13.5" cy="13.5" r=".8" fill="#c9d6ea"/><path d="M8.3 3v8.3c0 1.6 1 1.9 2.4 1.4" stroke="#fff" stroke-width="3" fill="none"/><path d="M5 6.5h6" stroke="#fff" stroke-width="2"/></svg><div class="t" style="left:1038px;top:254px;font-size:11px">Untitled-6 0001</div><div class="t" style="left:1158px;top:254px;font-size:11px">500</div><div class="t" style="left:1198px;top:254px;font-size:11px">6/20/2019</div><div class="t" style="left:1318px;top:254px;font-size:11px">6/20/201...</div><div class="a" style="left:1015px;top:290px;width:377px;height:1px;background:#ececec"></div><svg class="a" style="left:1019px;top:274px" width="16" height="16"><rect x="0" y="0" width="16" height="16" rx="3" fill="#4a6a9c"/><rect x="0" y="0" width="16" height="8" rx="3" fill="#6687b8" opacity=".5"/><circle cx="2.5" cy="2.5" r=".8" fill="#c9d6ea"/><circle cx="13.5" cy="2.5" r=".8" fill="#c9d6ea"/><circle cx="2.5" cy="13.5" r=".8" fill="#c9d6ea"/><circle cx="13.5" cy="13.5" r=".8" fill="#c9d6ea"/><path d="M8.3 3v8.3c0 1.6 1 1.9 2.4 1.4" stroke="#fff" stroke-width="3" fill="none"/><path d="M5 6.5h6" stroke="#fff" stroke-width="2"/></svg><div class="t" style="left:1038px;top:274px;font-size:11px">Untitled-6 0002</div><div class="t" style="left:1158px;top:274px;font-size:11px">500</div><div class="t" style="left:1198px;top:274px;font-size:11px">6/20/2019</div><div class="t" style="left:1318px;top:274px;font-size:11px">6/20/201...</div><div class="a" style="left:1015px;top:310px;width:377px;height:1px;background:#ececec"></div><svg class="a" style="left:1019px;top:294px" width="16" height="16"><rect x="0" y="0" width="16" height="16" rx="3" fill="#4a6a9c"/><rect x="0" y="0" width="16" height="8" rx="3" fill="#6687b8" opacity=".5"/><circle cx="2.5" cy="2.5" r=".8" fill="#c9d6ea"/><circle cx="13.5" cy="2.5" r=".8" fill="#c9d6ea"/><circle cx="2.5" cy="13.5" r=".8" fill="#c9d6ea"/><circle cx="13.5" cy="13.5" r=".8" fill="#c9d6ea"/><path d="M8.3 3v8.3c0 1.6 1 1.9 2.4 1.4" stroke="#fff" stroke-width="3" fill="none"/><path d="M5 6.5h6" stroke="#fff" stroke-width="2"/></svg><div class="t" style="left:1038px;top:294px;font-size:11px">cardboard.cdr</div><div class="t" style="left:1158px;top:294px;font-size:11px">500</div><div class="t" style="left:1198px;top:294px;font-size:11px">6/22/2019</div><div class="t" style="left:1318px;top:294px;font-size:11px">6/22/201...</div><div class="a" style="left:1015px;top:330px;width:377px;height:1px;background:#ececec"></div><svg class="a" style="left:1019px;top:314px" width="16" height="16"><rect x="0" y="0" width="16" height="16" rx="3" fill="#4a6a9c"/><rect x="0" y="0" width="16" height="8" rx="3" fill="#6687b8" opacity=".5"/><circle cx="2.5" cy="2.5" r=".8" fill="#c9d6ea"/><circle cx="13.5" cy="2.5" r=".8" fill="#c9d6ea"/><circle cx="2.5" cy="13.5" r=".8" fill="#c9d6ea"/><circle cx="13.5" cy="13.5" r=".8" fill="#c9d6ea"/><path d="M8.3 3v8.3c0 1.6 1 1.9 2.4 1.4" stroke="#fff" stroke-width="3" fill="none"/><path d="M5 6.5h6" stroke="#fff" stroke-width="2"/></svg><div class="t" style="left:1038px;top:314px;font-size:11px">Untitled-2</div><div class="t" style="left:1158px;top:314px;font-size:11px">500</div><div class="t" style="left:1198px;top:314px;font-size:11px">6/22/2019</div><div class="t" style="left:1318px;top:314px;font-size:11px">6/22/201...</div><div class="a" style="left:1015px;top:350px;width:377px;height:1px;background:#ececec"></div><svg class="a" style="left:1019px;top:334px" width="16" height="16"><rect x="0" y="0" width="16" height="16" rx="3" fill="#4a6a9c"/><rect x="0" y="0" width="16" height="8" rx="3" fill="#6687b8" opacity=".5"/><circle cx="2.5" cy="2.5" r=".8" fill="#c9d6ea"/><circle cx="13.5" cy="2.5" r=".8" fill="#c9d6ea"/><circle cx="2.5" cy="13.5" r=".8" fill="#c9d6ea"/><circle cx="13.5" cy="13.5" r=".8" fill="#c9d6ea"/><path d="M8.3 3v8.3c0 1.6 1 1.9 2.4 1.4" stroke="#fff" stroke-width="3" fill="none"/><path d="M5 6.5h6" stroke="#fff" stroke-width="2"/></svg><div class="t" style="left:1038px;top:334px;font-size:11px">Untitled-2 0001</div><div class="t" style="left:1158px;top:334px;font-size:11px">500</div><div class="t" style="left:1198px;top:334px;font-size:11px">6/22/2019</div><div class="t" style="left:1318px;top:334px;font-size:11px">6/22/201...</div><div class="a" style="left:1015px;top:370px;width:377px;height:1px;background:#ececec"></div><svg class="a" style="left:1019px;top:354px" width="16" height="16"><rect x="0" y="0" width="16" height="16" rx="3" fill="#4a6a9c"/><rect x="0" y="0" width="16" height="8" rx="3" fill="#6687b8" opacity=".5"/><circle cx="2.5" cy="2.5" r=".8" fill="#c9d6ea"/><circle cx="13.5" cy="2.5" r=".8" fill="#c9d6ea"/><circle cx="2.5" cy="13.5" r=".8" fill="#c9d6ea"/><circle cx="13.5" cy="13.5" r=".8" fill="#c9d6ea"/><path d="M8.3 3v8.3c0 1.6 1 1.9 2.4 1.4" stroke="#fff" stroke-width="3" fill="none"/><path d="M5 6.5h6" stroke="#fff" stroke-width="2"/></svg><div class="t" style="left:1038px;top:354px;font-size:11px">Untitled-3</div><div class="t" style="left:1158px;top:354px;font-size:11px">500</div><div class="t" style="left:1198px;top:354px;font-size:11px">6/22/2019</div><div class="t" style="left:1318px;top:354px;font-size:11px">6/22/201...</div><div class="a" style="left:1015px;top:390px;width:377px;height:1px;background:#ececec"></div><svg class="a" style="left:1019px;top:374px" width="16" height="16"><rect x="0" y="0" width="16" height="16" rx="3" fill="#4a6a9c"/><rect x="0" y="0" width="16" height="8" rx="3" fill="#6687b8" opacity=".5"/><circle cx="2.5" cy="2.5" r=".8" fill="#c9d6ea"/><circle cx="13.5" cy="2.5" r=".8" fill="#c9d6ea"/><circle cx="2.5" cy="13.5" r=".8" fill="#c9d6ea"/><circle cx="13.5" cy="13.5" r=".8" fill="#c9d6ea"/><path d="M8.3 3v8.3c0 1.6 1 1.9 2.4 1.4" stroke="#fff" stroke-width="3" fill="none"/><path d="M5 6.5h6" stroke="#fff" stroke-width="2"/></svg><div class="t" style="left:1038px;top:374px;font-size:11px">Untitled-3 0001</div><div class="t" style="left:1158px;top:374px;font-size:11px">500</div><div class="t" style="left:1198px;top:374px;font-size:11px">6/22/2019</div><div class="t" style="left:1318px;top:374px;font-size:11px">6/22/201...</div><div class="a" style="left:1015px;top:410px;width:377px;height:1px;background:#ececec"></div><svg class="a" style="left:1019px;top:394px" width="16" height="16"><rect x="0" y="0" width="16" height="16" rx="3" fill="#4a6a9c"/><rect x="0" y="0" width="16" height="8" rx="3" fill="#6687b8" opacity=".5"/><circle cx="2.5" cy="2.5" r=".8" fill="#c9d6ea"/><circle cx="13.5" cy="2.5" r=".8" fill="#c9d6ea"/><circle cx="2.5" cy="13.5" r=".8" fill="#c9d6ea"/><circle cx="13.5" cy="13.5" r=".8" fill="#c9d6ea"/><path d="M8.3 3v8.3c0 1.6 1 1.9 2.4 1.4" stroke="#fff" stroke-width="3" fill="none"/><path d="M5 6.5h6" stroke="#fff" stroke-width="2"/></svg><div class="t" style="left:1038px;top:394px;font-size:11px">building2.cdr</div><div class="t" style="left:1158px;top:394px;font-size:11px">500</div><div class="t" style="left:1198px;top:394px;font-size:11px">6/22/2019</div><div class="t" style="left:1318px;top:394px;font-size:11px">6/22/201...</div><div class="a" style="left:1015px;top:210px;width:394px;height:23px;background:transparent"></div>
<div class="a" style="left:1393px;top:234px;width:16px;height:176px;background:#f0f0f0"></div>
<div class="a" style="left:1394px;top:290px;width:14px;height:104px;background:#cdcdcd"></div>
<svg class="a" style="left:1396px;top:239px" width="10" height="7"><path d="M1 5.5l4-4 4 4" stroke="#606060" stroke-width="1.4" fill="none"/></svg>
<svg class="a" style="left:1396px;top:399px" width="10" height="7"><path d="M1 1.5l4 4 4-4" stroke="#606060" stroke-width="1.4" fill="none"/></svg>
<div class="a" style="left:1015px;top:410px;width:394px;height:24px;background:#d3d6dc"></div>
<div class="t" style="left:1238px;top:417px;font-size:11px;letter-spacing:-0.2px;color:#111">Filter: Standard, 500 dpi</div>
<div class="t" style="left:1367px;top:416px;font-size:11px;color:#1a3c8c;text-decoration:underline">Show all</div>
<div class="a" style="left:1238px;top:441px;width:70px;height:23px;background:#d3d6dc"></div>
<div class="t" style="left:1240px;top:446px;font-size:11px;color:#111">Duration:</div>
<div class="a" style="left:1323px;top:441px;width:62px;height:23px;background:#d3d6dc"></div>
<div class="t" style="left:1323px;top:446px;width:57px;text-align:right;font-size:11px;color:#111">6:49</div>
<div class="a" style="left:1385px;top:441px;width:24px;height:24px;background:#e4e4e4;border:1px solid #3a4a60;border-right-color:#fff;border-bottom-color:#fff"></div>
<svg class="a" style="left:1391px;top:446px" width="14" height="15"><circle cx="7" cy="8" r="5.3" fill="#fff" stroke="#333c4d" stroke-width="1.5"/><path d="M7 8V2.7A5.3 5.3 0 0 1 10.5 4z" fill="#3f5c88"/><rect x="6" y="0.5" width="2" height="2" fill="#333c4d"/><path d="M2.5 8h1.3M10.2 8h1.3M7 11.5v1.3" stroke="#8a93a8"/></svg>
<div class="a" style="left:1238px;top:473px;width:170px;height:21px;background:#d3d6dc"></div>
<div class="a" style="left:1239px;top:476px;width:13px;height:13px;background:#fff;border:1px solid #333"></div>
<svg class="a" style="left:1240px;top:477px" width="11" height="11"><path d="M1.5 5.5l3 3 5-7" stroke="#222" stroke-width="1.4" fill="none"/></svg>
<div class="t" style="left:1254px;top:476px;font-size:11px;color:#111">Job preview</div>
<div class="a" style="left:1239px;top:501px;width:169px;height:100px;background:#d3dbe7"></div><div class="a" style="left:1239px;top:501px;width:166px;height:100px;background:#e4e4e4"></div>
<div id="preview"></div>
<svg class="a" style="left:0;top:0" width="1426" height="752"><g transform="translate(1162.08 441.43) scale(0.277)" fill="none" stroke="#e3131d" stroke-width="3.8"><path d="M282.5 219.5H308.5V216.5H327.5V219.5H346.5V216.5H365.5V219.5H385.5V216.5H404.5V219.5H423.5V216.5H442.5V219.5H468.5V229.5H471.5V248.7H468.5V267.9H471.5V287.1H468.5V306.3H471.5V325.5H468.5V344.7H471.5V363.9H468.5V383.1H471.5V402.3H468.5V421.5H471.5V440.7H468.5V459.9H471.5V479.1H468.5V498.3H471.5V517.5H468.5V536.7H471.5V555.9H468.5V568.5H441.5V571.5H437.5V568.5H313.5V571.5H309.5V568.5H282.5V555.9H279.5V536.7H282.5V517.5H279.5V498.3H282.5V479.1H279.5V459.9H282.5V440.7H279.5V421.5H282.5V402.3H279.5V383.1H282.5V363.9H279.5V344.7H282.5V325.5H279.5V306.3H282.5V287.1H279.5V267.9H282.5V248.7H279.5V229.5H282.5Z"/><path d="M484.5 221.5H509.5V218.5H529.5V221.5H548.5V218.5H567.5V221.5H586.5V218.5H605.5V221.5H625.5V218.5H644.5V221.5H669.5V231.5H673.5V250.7H669.5V269.9H673.5V289.1H669.5V308.3H673.5V327.5H669.5V346.7H673.5V365.9H669.5V385.1H673.5V404.3H669.5V423.5H673.5V442.7H669.5V461.9H673.5V481.1H669.5V500.3H673.5V519.5H669.5V538.7H673.5V557.9H669.5V570.5H641.5V573.5H637.5V570.5H513.5V573.5H509.5V570.5H484.5V557.9H481.5V538.7H484.5V519.5H481.5V500.3H484.5V481.1H481.5V461.9H484.5V442.7H481.5V423.5H484.5V404.3H481.5V385.1H484.5V365.9H481.5V346.7H484.5V327.5H481.5V308.3H484.5V289.1H481.5V269.9H484.5V250.7H481.5V231.5H484.5Z"/><path d="M687.5 226.5H712.5V229.5H731.5V226.5H751.5V229.5H770.5V226.5H789.5V229.5H808.5V226.5H827.5V229.5H847.5V226.5H872.5V248.5H875.5V267.7H872.5V287.0H875.5V306.2H872.5V325.5H875.5V344.7H872.5V364.0H875.5V383.2H872.5V402.5H875.5V421.7H872.5V441.0H875.5V460.2H872.5V482.5H847.5V478.5H827.5V482.5H808.5V478.5H789.5V482.5H770.5V478.5H751.5V482.5H731.5V478.5H712.5V482.5H687.5V460.2H683.5V441.0H687.5V421.7H683.5V402.5H687.5V383.2H683.5V364.0H687.5V344.7H683.5V325.5H687.5V306.2H683.5V287.0H687.5V267.7H683.5V248.5H687.5Z"/><circle cx="362.5" cy="456.3" r="16" stroke-width="5"/></g><g fill="#e3131d"><rect x="1248.9" y="570.6" width="2" height="4.6"/><rect x="1248.9" y="584.8" width="2" height="4.6"/><rect x="1274.7" y="570.6" width="2" height="4.6"/><rect x="1274.7" y="584.8" width="2" height="4.6"/><rect x="1245.6" y="598.2" width="6.1" height="2"/><rect x="1281.1" y="598.2" width="6.1" height="2"/><rect x="1301.0" y="598.8" width="6.1" height="2"/><rect x="1336.5" y="598.8" width="6.1" height="2"/></g></svg>
<div class="a" style="left:1239px;top:608px;width:41px;height:40px;background:#ccd6e4"></div><div class="a" style="left:1244px;top:612px;width:32px;height:32px;border-radius:6px;background:radial-gradient(circle at 30% 25%,#6d8fc2,#3a5c92 70%)"></div><svg class="a" style="left:1253px;top:619px" width="14" height="19"><path d="M1 1l11.5 8.5L1 18z" fill="#fff"/></svg><div class="a" style="left:1303px;top:608px;width:41px;height:40px;background:#ccd6e4"></div><div class="a" style="left:1308px;top:612px;width:32px;height:32px;border-radius:6px;background:radial-gradient(circle at 30% 25%,#a9b9d3,#8097bb 70%)"></div><div class="a" style="left:1318px;top:622px;width:12px;height:12px;background:#ebedf2"></div><div class="a" style="left:1367px;top:608px;width:41px;height:40px;background:#ccd6e4"></div><div class="a" style="left:1372px;top:612px;width:32px;height:32px;border-radius:6px;background:radial-gradient(circle at 30% 25%,#6d8fc2,#3a5c92 70%)"></div><svg class="a" style="left:1374px;top:615px" width="28" height="26"><g fill="#fff"><ellipse cx="7" cy="9" rx="6.5" ry="3" transform="rotate(25 7 9)"/><ellipse cx="21" cy="17" rx="6.5" ry="3" transform="rotate(25 21 17)"/><ellipse cx="17" cy="6" rx="6.5" ry="2.8" transform="rotate(-60 17 6)"/><ellipse cx="11" cy="20" rx="6.5" ry="2.8" transform="rotate(-60 11 20)"/></g><circle cx="14" cy="13" r="3.5" fill="#fff" stroke="#3a5c92" stroke-width="1"/></svg><div class="a" style="left:1239px;top:666px;width:46px;height:16px;background:#ccd6e4"></div>
<div class="t" style="left:1239px;top:667px;font-size:11px;color:#111">Ready</div>
<div class="a" style="left:1293px;top:653px;width:30px;height:31px;background:#ccd6e4"></div>
<svg class="a" style="left:1300px;top:668px" width="16" height="15"><ellipse cx="8" cy="7.5" rx="7.5" ry="7" fill="#f4f4f4"/><ellipse cx="8" cy="7.5" rx="6" ry="5" fill="#c8001a"/><ellipse cx="8" cy="6" rx="4" ry="2.2" fill="#ff6070"/></svg>
<div class="a" style="left:1329px;top:666px;width:41px;height:16px;background:#ccd6e4"></div>
<div class="t" style="left:1330px;top:667px;font-size:11px;color:#111">Filter</div>
<div class="a" style="left:1377px;top:653px;width:31px;height:31px;background:#ccd6e4"></div>
<svg class="a" style="left:1385px;top:668px" width="16" height="15"><ellipse cx="8" cy="7.5" rx="7.5" ry="7" fill="#f4f4f4"/><ellipse cx="8" cy="7.5" rx="6" ry="5" fill="#c8001a"/><ellipse cx="8" cy="6" rx="4" ry="2.2" fill="#ff6070"/></svg>
<div class="a" style="left:1239px;top:690px;width:170px;height:36px;background:#d3d6dc;border:1px solid #7b8594;box-shadow:inset 1px 1px 0 #fff"></div>
<div class="a" style="left:1390px;top:692px;width:17px;height:32px;background:#eeeeee"></div>
<svg class="a" style="left:1393px;top:697px" width="11" height="25"><path d="M1 6l4.5-4 4.5 4M1 18l4.5 4 4.5-4" stroke="#b9b9b9" stroke-width="1.3" fill="none"/></svg>

<!-- status -->
<div id="status"></div>
<div class="a" style="left:1px;top:732px;width:1424px;height:1px;background:#6d8cbb"></div>
<div class="a" style="left:1px;top:733px;width:1424px;height:18px;background:linear-gradient(#d8e7fb,#c8dcf8 50%,#bcd4f5 60%,#c4daf8)"></div>
<div class="a" style="left:0;top:751px;width:1426px;height:1px;background:#2b79c2"></div>
<div class="sep" style="left:844px;top:734px;height:16px"></div>
<div class="t lbl" style="left:849px;top:736px;font-size:11px">Standard - Standard</div>
<div class="sep" style="left:1069px;top:734px;height:16px"></div>
<div class="t lbl" style="left:1074px;top:736px;font-size:11px">x:1089.1</div>
<div class="t lbl" style="left:1124px;top:736px;font-size:11px">y:43.8</div>
<div class="sep" style="left:1195px;top:734px;height:16px"></div>
<div class="t" style="left:1201px;top:736px;font-size:11px;color:#8d9db5">1:27</div>
<div class="sep" style="left:1336px;top:734px;height:16px"></div>
<div class="t" style="left:1341px;top:736px;font-size:11px;color:#8d9db5">UF</div>
<div class="sep" style="left:1357px;top:734px;height:16px"></div>
<div class="t lbl" style="left:1361px;top:736px;font-size:11px;color:#1e3f7a">NUM</div>
<div class="sep" style="left:1388px;top:734px;height:16px"></div>
<div class="t" style="left:1392px;top:736px;font-size:11px;letter-spacing:-0.5px;color:#8d9db5">RF</div>
<div class="sep" style="left:1407px;top:734px;height:16px"></div>
<svg class="a" style="left:1410px;top:738px" width="13" height="12"><g fill="#5d7fb0"><rect x="9" y="1" width="2" height="2"/><rect x="6" y="4" width="2" height="2"/><rect x="9" y="4" width="2" height="2"/><rect x="3" y="7" width="2" height="2"/><rect x="6" y="7" width="2" height="2"/><rect x="9" y="7" width="2" height="2"/></g></svg>

</body></html>
